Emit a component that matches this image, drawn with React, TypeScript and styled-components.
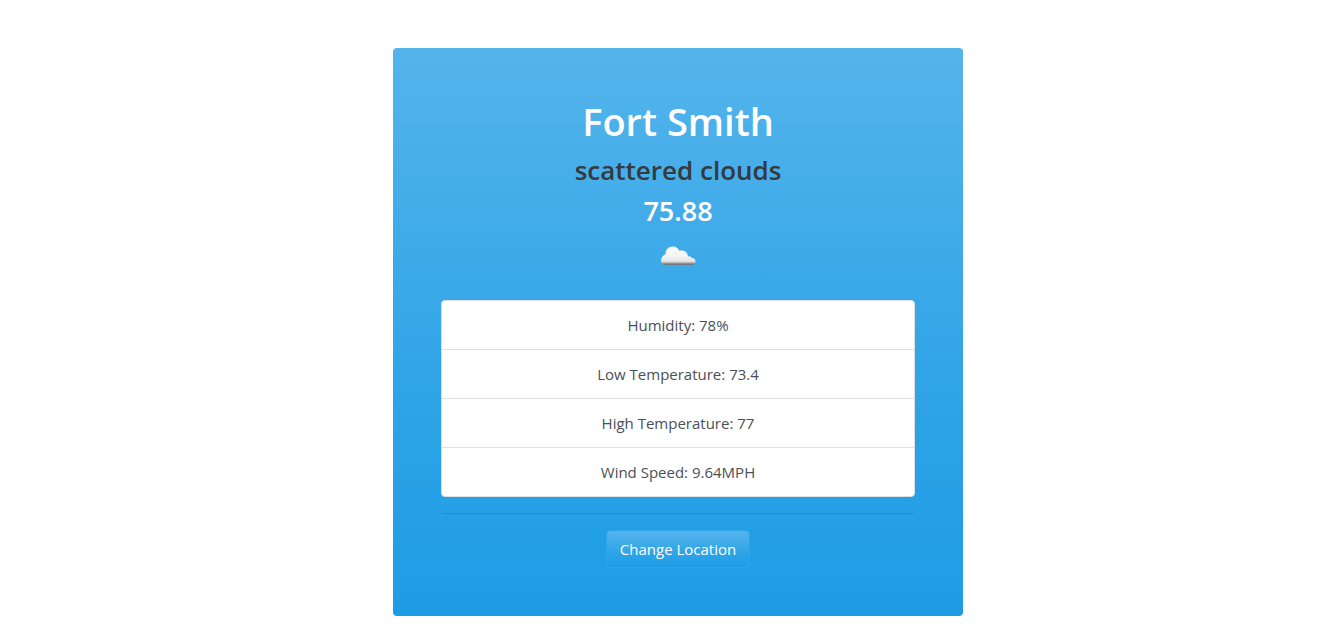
import React from 'react';
import styled, { createGlobalStyle } from 'styled-components';

const GlobalStyle = createGlobalStyle`
  *, *::before, *::after { box-sizing: border-box; }
  body {
    margin: 0;
    background: #fff;
    color: #495057;
    font-family: "Segoe UI", "Open Sans", "Noto Sans", sans-serif;
    font-size: 15px;
    line-height: 24px;
  }
`;

const skyGradient = 'linear-gradient(#54b4eb, #2fa4e7 60%, #1d9ce5)';

const Page = styled.main`
  display: flex;
  justify-content: center;
  padding: 48px 0 8px 12px;
`;

const Card = styled.section`
  width: 100%;
  max-width: 570px;
  padding: 48px;
  border-radius: 4px;
  background: ${skyGradient};
  text-align: center;
`;

const City = styled.h1`
  margin: 0 0 6px;
  color: #fff;
  font-size: 38px;
  font-weight: 600;
  line-height: 50px;
`;

const Conditions = styled.h2`
  margin: 0 0 6px;
  color: #343a40;
  font-size: 26px;
  font-weight: 600;
  line-height: 36px;
`;

const Temperature = styled.h2`
  margin: 0 0 8px;
  color: #fff;
  font-size: 27px;
  font-weight: 600;
  line-height: 34px;
`;

const CloudIcon = styled.svg`
  display: block;
  width: 36px;
  height: 40px;
  margin: 0 auto 24px;
`;

const Details = styled.ul`
  margin: 0 0 16px;
  padding: 0;
  list-style: none;
  border: 1px solid #dfdfdf;
  border-radius: 4px;
  background: #fff;
`;

const Detail = styled.li`
  padding: 12px 20px;

  & + & {
    border-top: 1px solid #dfdfdf;
  }
`;

const Divider = styled.hr`
  margin: 0 0 16px;
  border: 0;
  border-top: 1px solid rgba(0, 0, 0, 0.1);
`;

const ChangeButton = styled.button`
  display: block;
  margin: 0 auto;
  padding: 6px 13px;
  border: 1px solid #2fa4e7;
  border-radius: 4px;
  background: ${skyGradient};
  color: #fff;
  font: inherit;
  cursor: pointer;
`;

const details = ['Humidity: 78%', 'Low Temperature: 73.4', 'High Temperature: 77', 'Wind Speed: 9.64MPH'];

function Cloud() {
  return (
    <CloudIcon viewBox="0 0 36 40" role="img" aria-label="Cloudy">
      <defs>
        <linearGradient id="cloud-fill" x1="0" y1="10" x2="0" y2="29" gradientUnits="userSpaceOnUse">
          <stop offset="0" stopColor="#fbfbfb" />
          <stop offset="0.5" stopColor="#f4f4f4" />
          <stop offset="0.8" stopColor="#e6e6e6" />
          <stop offset="0.88" stopColor="#b5b5b5" />
          <stop offset="0.95" stopColor="#777" />
          <stop offset="1" stopColor="#6d7a82" />
        </linearGradient>
      </defs>
      <path
        d="M5 29C2.500 29 1 27.200 1 24.800C1 21.800 3 19.300 5.500 18.300C5.300 14 8.300 10.500 12.800 10.500C16 10.500 18.500 12.300 19.600 15C23.500 13.600 27.500 16 28 20.200C29.500 19.900 31.500 20.700 32.100 22.100C34.200 22.100 35.500 23.600 35.500 25.500C35.500 27.600 34 29 32 29Z"
        fill="url(#cloud-fill)"
      />
    </CloudIcon>
  );
}

export default function App() {
  return (
    <>
      <GlobalStyle />
      <Page>
        <Card>
          <City>Fort Smith</City>
          <Conditions>scattered clouds</Conditions>
          <Temperature>75.88</Temperature>
          <Cloud />
          <Details>
            {details.map((text) => (
              <Detail key={text}>{text}</Detail>
            ))}
          </Details>
          <Divider />
          <ChangeButton type="button">Change Location</ChangeButton>
        </Card>
      </Page>
    </>
  );
}
